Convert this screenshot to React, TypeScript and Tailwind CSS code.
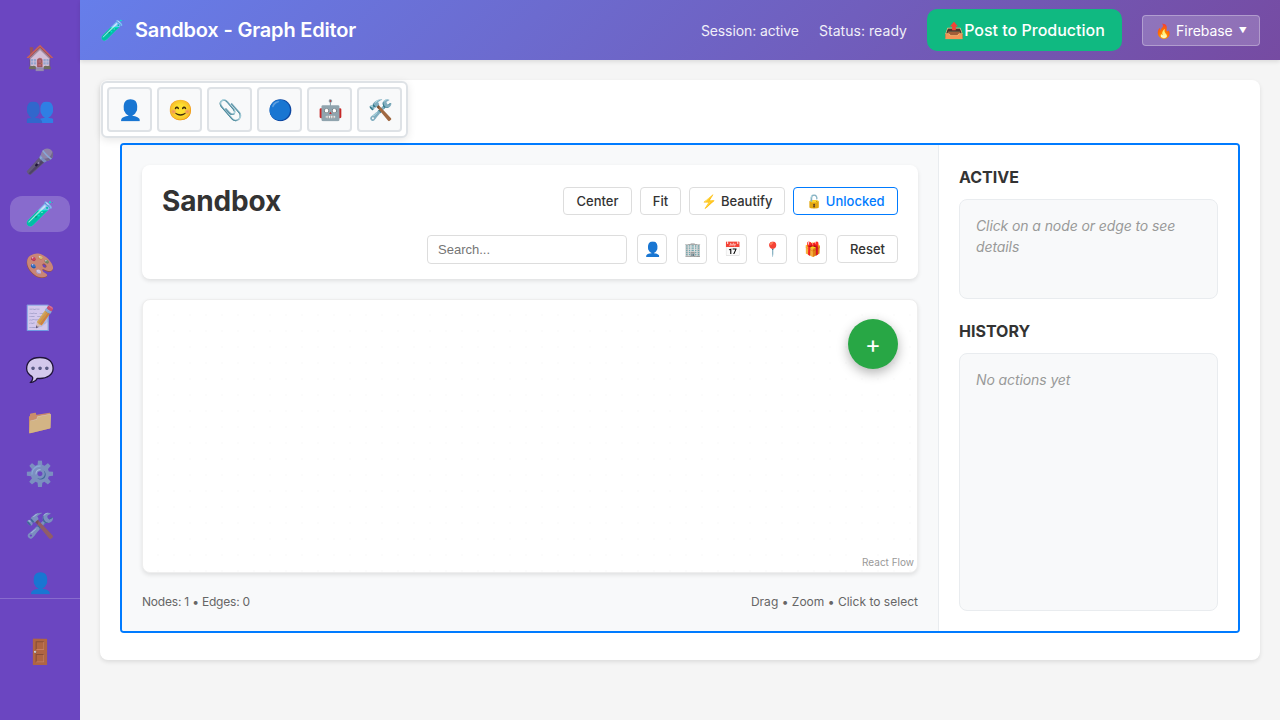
const navItems = ["🏠", "👥", "🎤", "🧪", "🎨", "📝", "💬", "📁", "⚙️", "🛠️"]
const paletteItems = ["👤", "😊", "📎", "🔵", "🤖", "🛠️"]
const filterItems = ["👤", "🏢", "📅", "📍", "🎁"]

const Sidebar = () => {
    return (
        <aside className="flex h-[720px] w-20 shrink-0 flex-col bg-[#6b46c1]">
            <nav className="flex h-[598px] flex-col items-center gap-4 overflow-hidden px-2.5 pt-10">
                {navItems.map((icon, i) => (
                    <div
                        key={i}
                        className={
                            i === 3
                                ? "flex h-9 w-[60px] shrink-0 items-center justify-center rounded-xl bg-white/20 text-2xl leading-none"
                                : "flex h-9 w-[60px] shrink-0 items-center justify-center rounded-xl text-2xl leading-none opacity-70"
                        }
                    >
                        {icon}
                    </div>
                ))}
                <div className="flex h-9 w-[60px] shrink-0 items-center justify-center pt-2.5 text-xl leading-none">👤</div>
            </nav>
            <div className="flex flex-1 justify-center border-t border-white/20 px-2.5 pt-[35px]">
                <div className="flex h-9 w-[60px] items-center justify-center text-2xl leading-none">🚪</div>
            </div>
        </aside>
    )
}

const Header = () => {
    return (
        <header className="flex h-[60px] shrink-0 items-center justify-between bg-[linear-gradient(135deg,#667eea_0%,#764ba2_100%)] pl-5 pr-5 text-white shadow-[0_2px_4px_rgba(0,0,0,0.1)]">
            <h1 className="flex items-center gap-2.5 text-xl font-semibold">
                <span>🧪</span>
                <span className="tracking-[-0.18px]">Sandbox - Graph Editor</span>
            </h1>
            <div className="flex items-center gap-5">
                <span className="pt-px text-sm tracking-[-0.1px] opacity-90">Session: active</span>
                <span className="pt-px text-sm tracking-[0.05px] opacity-90">Status: ready</span>
                <button className="flex h-[42px] w-[195px] items-center justify-center rounded-[10px] bg-[#10b981] text-base font-medium text-white">
                    📤Post to Production
                </button>
                <button className="flex h-[31px] w-[118px] items-center justify-center gap-1.5 rounded border border-white/30 bg-white/20 pt-px text-sm tracking-[-0.05px] text-white">
                    <span>🔥 Firebase</span>
                    <span className="text-[8px]">▼</span>
                </button>
            </div>
        </header>
    )
}

const Toolbar = () => {
    return (
        <div className="absolute left-px top-px flex gap-[5px] rounded-md border-2 border-[#dee2e6] bg-white p-1 shadow-[0_2px_8px_rgba(0,0,0,0.1)]">
            {paletteItems.map((icon, i) => (
                <button
                    key={i}
                    className="flex h-[45px] w-[45px] items-center justify-center rounded border-2 border-[#dee2e6] bg-[#f8f9fa] pl-px text-xl"
                >
                    {icon}
                </button>
            ))}
        </div>
    )
}

const GraphHeader = () => {
    return (
        <div className="flex h-[114px] flex-col rounded-lg bg-white px-5 pt-[22px] shadow-[0_2px_4px_rgba(0,0,0,0.1)]">
            <div className="flex h-7 items-center justify-between">
                <h2 className="text-[28px] font-bold tracking-[-0.15px] text-[#333]">Sandbox</h2>
                <div className="flex gap-2 text-[13px] font-medium text-[#333]">
                    <button className="h-7 w-[69px] rounded border border-[#ddd] bg-white pt-0.5">Center</button>
                    <button className="h-7 w-[41px] rounded border border-[#ddd] bg-white pt-0.5">Fit</button>
                    <button className="h-7 w-[96px] rounded border border-[#ddd] bg-white pt-0.5">⚡ Beautify</button>
                    <button className="h-7 w-[105px] rounded border border-[#007bff] bg-white pt-0.5 text-[#007bff]">🔓 Unlocked</button>
                </div>
            </div>
            <div className="mt-[19px] flex items-center justify-end gap-2.5">
                <input
                    placeholder="Search..."
                    className="h-[29px] w-[200px] rounded border border-[#ddd] bg-white px-2.5 font-['Liberation_Sans',sans-serif] text-[13px] outline-none placeholder:text-[#757575]"
                />
                {filterItems.map((icon, i) => (
                    <button key={i} className="flex h-[30px] w-[30px] items-center justify-center rounded border border-[#ddd] bg-white text-sm">
                        {icon}
                    </button>
                ))}
                <button className="h-7 w-[61px] rounded border border-[#ddd] bg-white pt-0.5 text-[13px] font-medium text-[#333]">Reset</button>
            </div>
        </div>
    )
}

const Canvas = () => {
    return (
        <div className="relative mt-5 h-[274px] rounded-lg border border-[#eee] bg-white bg-[radial-gradient(#fcfcfc_1px,transparent_1px)] bg-[size:16px_16px] bg-[position:7px_7px] shadow-[0_2px_4px_rgba(0,0,0,0.1)]">
            <button className="absolute right-[19px] top-[19px] flex h-[50px] w-[50px] items-center justify-center rounded-full bg-[#28a745] pt-0.5 text-2xl text-white shadow-[0_4px_12px_rgba(0,0,0,0.3)]">
                +
            </button>
            <span className="absolute bottom-[3px] right-[3px] text-[10px] leading-[13px] text-[#999]">React Flow</span>
        </div>
    )
}

const InfoBox = ({ title, text, height }: { title: string; text: string; height: string }) => {
    return (
        <section>
            <h3 className="text-base font-bold leading-5 text-[#333]">{title}</h3>
            <div className={`mt-3 rounded-lg border border-[#e9ecef] bg-[#f8f9fa] px-4 pt-[15px] text-sm italic leading-[21px] tracking-[-0.1px] text-[#999] ${height}`}>
                {text}
            </div>
        </section>
    )
}

const App = () => {
    return (
        <div className="flex h-[720px] w-[1280px] overflow-hidden bg-[#f5f5f5] font-['Inter',sans-serif]">
            <Sidebar />
            <div className="flex min-w-0 flex-1 flex-col">
                <Header />
                <main className="p-5">
                    <div className="relative h-[580px] rounded-lg bg-white px-5 pb-[27px] pt-[63px] shadow-[0_2px_4px_rgba(0,0,0,0.1)]">
                        <Toolbar />
                        <div className="flex h-[490px] overflow-hidden rounded border-2 border-[#007bff]">
                            <div className="flex w-[817px] shrink-0 flex-col border-r border-[#e9ecef] bg-[#f8f9fa] px-5 pt-5">
                                <GraphHeader />
                                <Canvas />
                                <div className="mt-[21px] flex items-center justify-between text-xs text-[#666]">
                                    <span className="tracking-[-0.2px]">Nodes: 1 • Edges: 0</span>
                                    <span className="tracking-[0.02px]">Drag • Zoom • Click to select</span>
                                </div>
                            </div>
                            <div className="flex flex-1 flex-col gap-[22px] bg-white px-5 pt-[22px]">
                                <InfoBox title="ACTIVE" text="Click on a node or edge to see details" height="h-[100px]" />
                                <InfoBox title="HISTORY" text="No actions yet" height="h-[258px]" />
                            </div>
                        </div>
                    </div>
                </main>
            </div>
        </div>
    )
}

export default App
